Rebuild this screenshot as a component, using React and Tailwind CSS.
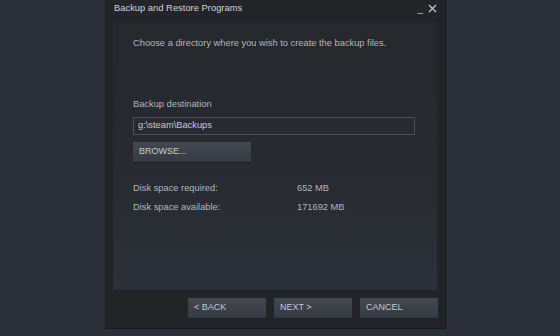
import React from "react";

const Btn = ({ children, className = "" }) => (
  <button
    className={
      "h-[20px] text-left pl-[6px] text-[9px] text-[#c6cad0] bg-gradient-to-b from-[#434851] to-[#363a42] shadow-[0_1px_0_#1c1e22] " +
      className
    }
  >
    {children}
  </button>
);

const App = () => {
  return (
    <div
      className="w-[560px] h-[336px] bg-[#2b2f37] flex overflow-hidden"
      style={{ fontFamily: '"Liberation Sans", Arial, sans-serif' }}
    >
      <div className="ml-[105px] w-[341px] h-[329px] bg-[#222428] border-r border-b border-[#18191c] flex flex-col">
        {/* title bar */}
        <div className="h-[22px] flex items-start justify-between pl-[9px] pr-[8px] pt-[1px]">
          <span className="text-[9.4px] text-[#d0d3d8]">Backup and Restore Programs</span>
          <div className="flex items-center gap-[5px] text-[#b8bcc2]">
            <span className="text-[10px] leading-none mt-[3px]">_</span>
            <svg width="9" height="9" viewBox="0 0 9 9" className="mt-[1px]">
              <path d="M1 1L8 8M8 1L1 8" stroke="#c2c6cc" strokeWidth="1.3" />
            </svg>
          </div>
        </div>

        {/* content panel */}
        <div className="mx-[8px] h-[268px] bg-gradient-to-b from-[#25282d] via-[#272a30] to-[#2c3038] flex flex-col pl-[20px] pr-[22px] text-[9.3px] text-[#b3b7bd]">
          <p className="mt-[15px]">Choose a directory where you wish to create the backup files.</p>

          <p className="mt-[47px]">Backup destination</p>
          <div className="mt-[5px] h-[18px] border border-[#4b4f57] flex items-center pl-[4px] text-[#c8ccd2]">
            g:\steam\Backups
          </div>
          <Btn className="mt-[7px] w-[118px]">BROWSE...</Btn>

          <div className="mt-[20px] flex">
            <span className="w-[164px]">Disk space required:</span>
            <span>652 MB</span>
          </div>
          <div className="mt-[5px] flex">
            <span className="w-[164px]">Disk space available:</span>
            <span>171692 MB</span>
          </div>
        </div>

        {/* footer buttons */}
        <div className="flex justify-end gap-[8px] pr-[7px] mt-[8px]">
          <Btn className="w-[78px]">&lt; BACK</Btn>
          <Btn className="w-[78px]">NEXT &gt;</Btn>
          <Btn className="w-[78px]">CANCEL</Btn>
        </div>
      </div>
    </div>
  );
};

export default App;
